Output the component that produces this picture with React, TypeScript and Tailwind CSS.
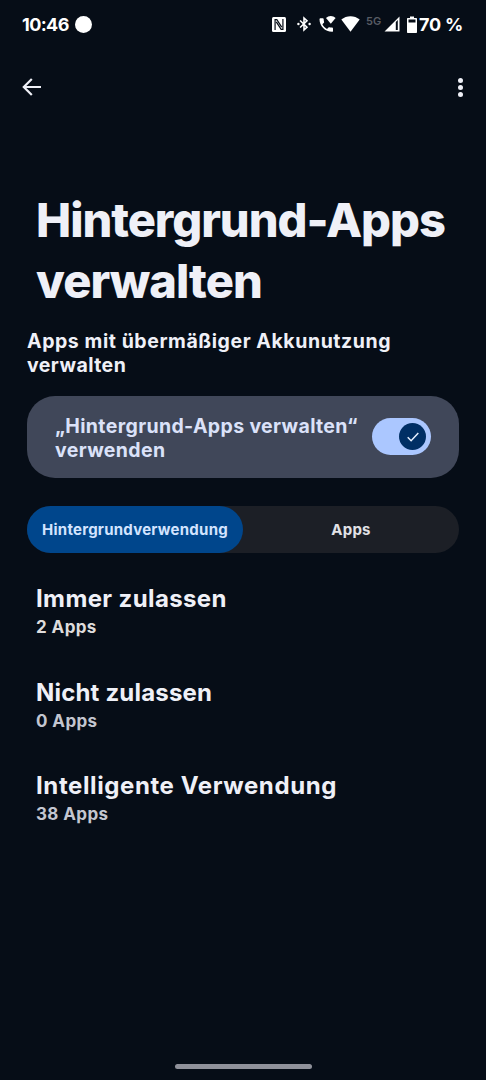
import { useState } from 'react';
import { clsx } from 'clsx';

type UsageGroup = {
  label: string;
  count: string;
  countClass: string;
  labelClass: string;
};

const GROUPS: UsageGroup[] = [
  { label: 'Immer zulassen', count: '2 Apps', labelClass: 'tracking-[0.38px]', countClass: 'text-[#dedcdc]' },
  { label: 'Nicht zulassen', count: '0 Apps', labelClass: 'tracking-[0.18px]', countClass: 'text-[#c3c6d0]' },
  { label: 'Intelligente Verwendung', count: '38 Apps', labelClass: 'tracking-[0.6px]', countClass: 'text-[#c3c6d0]' },
];

function StatusBar() {
  return (
    <div className="flex h-12 shrink-0 items-center justify-between pl-[22px] pr-6 text-white">
      <div className="flex items-center">
        <span className="w-[53px] whitespace-nowrap text-[18px] font-bold tracking-[-0.6px]">10:46</span>
        <span className="h-[17px] w-[17px] rounded-full bg-white" />
      </div>
      <div className="flex items-center">
        <svg className="mr-[11px] h-[15px] w-[14px]" viewBox="0 0 15 15" preserveAspectRatio="none" aria-hidden>
          <rect width="15" height="15" rx="1.5" fill="currentColor" />
          <path
            d="M3.3 13V2.6h1.9l5.2 7.5M11.7 2v10.4H9.8L4.6 4.9"
            fill="none"
            stroke="#060d17"
            strokeWidth="1.3"
          />
        </svg>
        <svg className="mr-2 h-4 w-[14px]" viewBox="0 0 15 16" aria-hidden>
          <path
            d="M3.3 4.2l7.4 7.2-3.2 3V1.6l3.2 3-7.4 7.2"
            fill="none"
            stroke="currentColor"
            strokeWidth="1.7"
          />
          <circle cx="1.5" cy="8" r="1.3" fill="currentColor" />
          <circle cx="13.5" cy="8" r="1.3" fill="currentColor" />
        </svg>
        <svg className="mr-[5px] h-[18px] w-[17px]" viewBox="0 0 17 18" aria-hidden>
          <path
            d="M.5 4.2C.5 3.7.9 3.3 1.4 3.3h2.4c.5 0 .9.4.9.9 0 1 .2 1.900.4 2.700.1.300 0 .7-.2.9L3.400 9.300c1 2.100 2.600 3.600 4.600 4.600l1.500-1.500c.3-.2.6-.3.9-.2.9.3 1.800.4 2.700.4.5 0 .9.4.9.9v2.400c0 .5-.4.9-.9.9C6 16.800.5 11 .5 4.200z"
            fill="currentColor"
          />
          <path d="M7 3C9.500.3 14 .3 16.600 3L11.800 8.800z" fill="currentColor" />
        </svg>
        <svg className="mr-[6px] h-4 w-[19px]" viewBox="0 0 19 16" aria-hidden>
          <path d="M.3 3.6C5.5-.9 13.5-.9 18.7 3.6L9.5 15.7z" fill="currentColor" />
        </svg>
        <span className="mr-[3px] w-[15px] -translate-y-[3px] whitespace-nowrap text-[11px] font-semibold leading-none text-[#585c64]">
          5G
        </span>
        <svg className="mr-[7px] h-4 w-4" viewBox="0 0 16 16" aria-hidden>
          <path d="M15.5.5v15H.5zM11.800 6v8h2V4z" fill="currentColor" fillRule="evenodd" />
        </svg>
        <svg className="mr-[2px] h-[17px] w-[10px]" viewBox="0 0 10 17" aria-hidden>
          <path
            d="M3 .5h4V2h2c.6 0 1 .4 1 1v13c0 .6-.4 1-1 1H1c-.6 0-1-.4-1-1V3c0-.6.4-1 1-1h2zM1.500 3.500v3h7v-3z"
            fill="currentColor"
            fillRule="evenodd"
          />
        </svg>
        <span className="w-[43px] whitespace-nowrap text-[18px] font-bold tracking-[-0.2px]">70 %</span>
      </div>
    </div>
  );
}

function Toolbar() {
  return (
    <div className="flex h-[78px] shrink-0 items-center justify-between pl-[22px] pr-[23px] text-[#eff0f7]">
      <button type="button" aria-label="Zurück">
        <svg className="h-5 w-5" viewBox="0 0 20 20" fill="none" aria-hidden>
          <path d="M19 10H2M9.8 2L1.8 10l8 8" stroke="currentColor" strokeWidth="2.2" />
        </svg>
      </button>
      <button type="button" aria-label="Weitere Optionen" className="flex flex-col gap-[2px]">
        <span className="h-[5px] w-[5px] rounded-full bg-current" />
        <span className="h-[5px] w-[5px] rounded-full bg-current" />
        <span className="h-[5px] w-[5px] rounded-full bg-current" />
      </button>
    </div>
  );
}

function Toggle({ checked, onChange }: { checked: boolean; onChange: (next: boolean) => void }) {
  return (
    <button
      type="button"
      role="switch"
      aria-checked={checked}
      aria-label="Hintergrund-Apps verwalten"
      onClick={() => onChange(!checked)}
      className={clsx(
        'mb-px flex h-[37px] w-[59px] shrink-0 items-center rounded-full px-[5px]',
        checked ? 'justify-end bg-[#abc7ff]' : 'justify-start bg-[#1b1f27]'
      )}
    >
      <span className="flex h-[27px] w-[27px] items-center justify-center rounded-full bg-[#002f65]">
        {checked && (
          <svg className="h-[10px] w-[12px]" viewBox="0 0 12 10" fill="none" aria-hidden>
            <path d="M.7 5.2l3.4 3.5L11.3.9" stroke="#e6f0ff" strokeWidth="1.5" />
          </svg>
        )}
      </span>
    </button>
  );
}

export default function App() {
  const [enabled, setEnabled] = useState(true);
  const [tab, setTab] = useState<'usage' | 'apps'>('usage');

  return (
    <div className="flex h-[1080px] w-[486px] flex-col overflow-hidden bg-[#060d17] font-['Inter','Open_Sans',sans-serif] text-[#eff0f7]">
      <StatusBar />
      <Toolbar />

      <main className="flex flex-1 flex-col px-[27px]">
        <h1 className="mt-[63px] whitespace-nowrap pl-[9px] text-[47px] font-extrabold leading-[61px]">
          <span className="block tracking-[-1.05px]">Hintergrund-Apps</span>
          <span className="block tracking-[-0.9px]">verwalten</span>
        </h1>
        <p className="mt-[18px] whitespace-nowrap text-[19.5px] font-bold leading-6">
          <span className="block tracking-[0.57px]">Apps mit übermäßiger Akkunutzung</span>
          <span className="block tracking-[0.45px]">verwalten</span>
        </p>

        <section className="mt-[19px] flex h-[82px] items-center justify-between rounded-[28px] bg-[#404759] pl-7 pr-7">
          <p className="whitespace-nowrap pt-px text-[19.5px] font-bold leading-6 tracking-[0.36px] text-[#dbe2f9]">
            <span className="block">„Hintergrund-Apps verwalten“</span>
            <span className="block">verwenden</span>
          </p>
          <Toggle checked={enabled} onChange={setEnabled} />
        </section>

        <div className="mt-7 grid h-[47px] grid-cols-2 rounded-full bg-[#1c1f26] text-[15px] font-bold tracking-[0.24px]">
          <button
            type="button"
            onClick={() => setTab('usage')}
            className={clsx(
              'whitespace-nowrap rounded-full pt-[2px]',
              tab === 'usage' ? 'bg-[#00468c] text-[#d3e4ff]' : 'text-[#e2e2e6]'
            )}
          >
            Hintergrundverwendung
          </button>
          <button
            type="button"
            onClick={() => setTab('apps')}
            className={clsx(
              'whitespace-nowrap rounded-full pt-[2px]',
              tab === 'apps' ? 'bg-[#00468c] text-[#d3e4ff]' : 'text-[#e2e2e6]'
            )}
          >
            Apps
          </button>
        </div>

        <ul className="mt-[30px] flex flex-col gap-[37px] pl-[9px]">
          {GROUPS.map((group) => (
            <li key={group.label} className="h-[56.5px]">
              <p className={clsx('text-[24px] font-bold leading-8', group.labelClass)}>
                {group.label}
              </p>
              <p className={clsx('text-[17px] font-bold leading-6 tracking-[0.4px]', group.countClass)}>
                {group.count}
              </p>
            </li>
          ))}
        </ul>
      </main>

      <div className="mb-[11px] h-[5px] w-[137px] shrink-0 self-center rounded-full bg-[#8f919a]" />
    </div>
  );
}
